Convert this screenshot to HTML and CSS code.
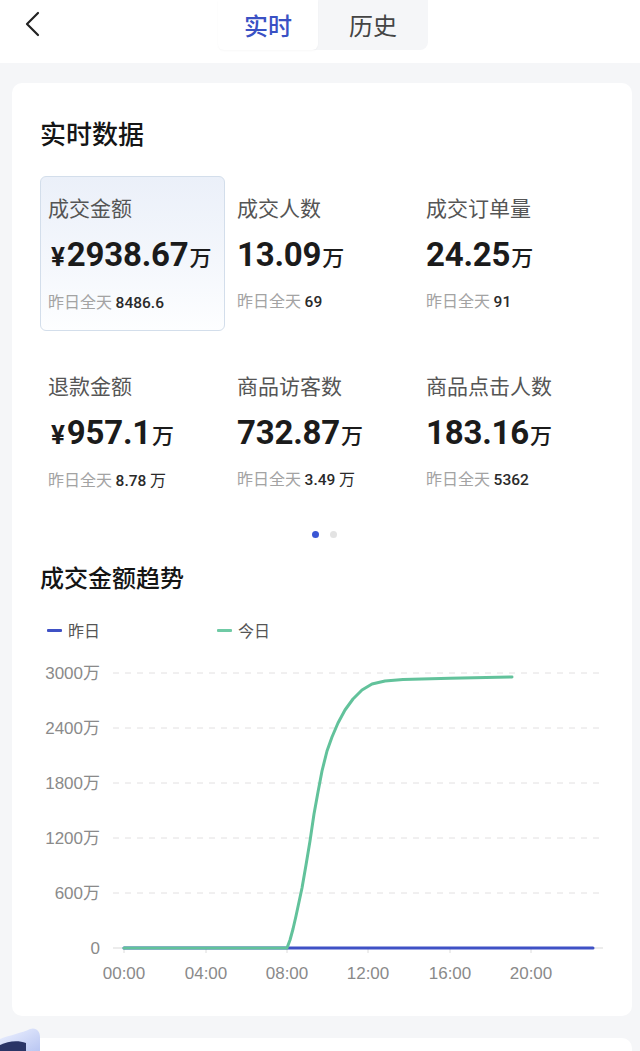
FILE: index.html
```html
<!DOCTYPE html>
<html lang="zh-CN">
<head>
<meta charset="utf-8">
<title>实时数据</title>
<link rel="stylesheet" href="styles.css">
</head>
<body>
<header class="topbar">
  <button class="back" aria-label="返回">
    <svg width="16" height="26" viewBox="0 0 16 26"><path d="M14 2 L3 13 L14 24" fill="none" stroke="#222" stroke-width="2.2" stroke-linecap="round" stroke-linejoin="round"/></svg>
  </button>
  <nav class="tabs">
    <span class="tab active">实时</span>
    <span class="tab">历史</span>
  </nav>
</header>

<main class="main">
  <section class="card">
    <h1 class="title">实时数据</h1>
    <div class="grid">
      <div class="cell selected">
        <div class="label">成交金额</div>
        <div class="value"><span class="yen">¥</span>2938.67<span class="unit">万</span></div>
        <div class="sub">昨日全天 <b>8486.6</b></div>
      </div>
      <div class="cell">
        <div class="label">成交人数</div>
        <div class="value">13.09<span class="unit">万</span></div>
        <div class="sub">昨日全天 <b>69</b></div>
      </div>
      <div class="cell">
        <div class="label">成交订单量</div>
        <div class="value">24.25<span class="unit">万</span></div>
        <div class="sub">昨日全天 <b>91</b></div>
      </div>
      <div class="cell">
        <div class="label">退款金额</div>
        <div class="value"><span class="yen">¥</span>957.1<span class="unit">万</span></div>
        <div class="sub">昨日全天 <b>8.78</b> <b class="cn">万</b></div>
      </div>
      <div class="cell">
        <div class="label">商品访客数</div>
        <div class="value">732.87<span class="unit">万</span></div>
        <div class="sub">昨日全天 <b>3.49</b> <b class="cn">万</b></div>
      </div>
      <div class="cell">
        <div class="label">商品点击人数</div>
        <div class="value">183.16<span class="unit">万</span></div>
        <div class="sub">昨日全天 <b>5362</b></div>
      </div>
    </div>
    <div class="dots"><span class="dot on"></span><span class="dot"></span></div>

    <h2 class="subtitle">成交金额趋势</h2>
    <div class="legend">
      <span class="lg"><i class="bar blue"></i>昨日</span>
      <span class="lg"><i class="bar green"></i>今日</span>
    </div>
    <svg class="chart" width="567" height="345" viewBox="0 0 567 345">
      <g class="grid-lines" stroke="#e2e0e1" stroke-width="1" stroke-dasharray="6 6">
        <line x1="73" y1="20" x2="563" y2="20"/>
        <line x1="73" y1="75" x2="563" y2="75"/>
        <line x1="73" y1="130" x2="563" y2="130"/>
        <line x1="73" y1="185" x2="563" y2="185"/>
        <line x1="73" y1="240" x2="563" y2="240"/>
      </g>
      <line x1="73" y1="295" x2="563" y2="295" stroke="#d9d9d9" stroke-width="1"/>
      <g stroke="#dcdcdc" stroke-width="1">
        <line x1="84" y1="295" x2="84" y2="300"/>
        <line x1="166" y1="295" x2="166" y2="300"/>
        <line x1="247" y1="295" x2="247" y2="300"/>
        <line x1="328" y1="295" x2="328" y2="300"/>
        <line x1="410" y1="295" x2="410" y2="300"/>
        <line x1="491" y1="295" x2="491" y2="300"/>
      </g>
      <g class="ylab" text-anchor="end">
        <text x="60" y="26">3000万</text>
        <text x="60" y="81">2400万</text>
        <text x="60" y="136">1800万</text>
        <text x="60" y="191">1200万</text>
        <text x="60" y="246">600万</text>
        <text x="60" y="301">0</text>
      </g>
      <g class="xlab" text-anchor="middle">
        <text x="84" y="326">00:00</text>
        <text x="166" y="326">04:00</text>
        <text x="247" y="326">08:00</text>
        <text x="328" y="326">12:00</text>
        <text x="410" y="326">16:00</text>
        <text x="491" y="326">20:00</text>
      </g>
      <line x1="84" y1="295" x2="553" y2="295" stroke="#3f51c5" stroke-width="3" stroke-linecap="round"/>
      <polyline fill="none" stroke="#62c29b" stroke-width="3" stroke-linecap="round" stroke-linejoin="round"
        points="84,295 247,295 250,287 253,276 256,263 259,249 262,235 266,212 270,188 274,161 278,139 282,118 287,98 292,84 298,70 305,57 313,46 322,37 332,31 345,28 363,26.5 410,25.3 472,24"/>
    </svg>
  </section>
  <section class="card next"></section>
</main>

<div class="float-badge" aria-hidden="true">
  <svg width="44" height="26" viewBox="0 0 44 26">
    <defs>
      <linearGradient id="bg1" x1="0" y1="0" x2="1" y2="1">
        <stop offset="0" stop-color="#eef2ff"/>
        <stop offset="1" stop-color="#b9c6f2"/>
      </linearGradient>
    </defs>
    <path d="M0 14 C10 10 22 8 30 4 C36 2 40 6 40 12 L40 26 L0 26 Z" fill="url(#bg1)"/>
    <path d="M0 20 C8 16 18 15 26 18 L26 26 L0 26 Z" fill="#2b3566"/>
  </svg>
</div>
</body>
</html>
```
FILE: styles.css
```css
* { box-sizing: border-box; }
html, body { margin: 0; padding: 0; }
body {
  width: 640px;
  min-height: 1051px;
  background: #f5f6f8;
  font-family: "Noto Sans CJK SC", "Noto Sans", sans-serif;
  color: #222;
  position: relative;
  overflow: hidden;
}

.topbar {
  height: 63px;
  background: #fff;
  display: flex;
  align-items: flex-start;
  padding-left: 24px;
}
.back {
  margin-top: 11px;
  width: 18px;
  height: 26px;
  padding: 0;
  border: 0;
  background: none;
  display: flex;
}
.tabs {
  margin-left: 176px;
  display: flex;
  height: 50px;
  background: #f5f6f8;
  border-radius: 0 0 8px 8px;
}
.tab {
  display: flex;
  align-items: center;
  justify-content: center;
  font-size: 24px;
  color: #444;
  width: 110px;
  height: 50px;
  padding-bottom: 2px;
}
.tab.active {
  width: 100px;
  background: #fff;
  color: #3a51c4;
  font-weight: 500;
  border-radius: 0 0 6px 6px;
  box-shadow: 0 1px 2px rgba(0,0,0,0.03);
}

.main {
  padding: 20px 8px 0 12px;
}
.card {
  background: #fff;
  border-radius: 10px;
  padding: 32px 25px 18px 28px;
}
.card.next {
  margin-top: 22px;
  height: 40px;
  padding: 0;
}
.title {
  margin: 0;
  font-size: 26px;
  line-height: 36px;
  font-weight: 500;
  color: #151515;
}

.grid {
  margin-top: 25px;
  display: grid;
  grid-template-columns: repeat(3, 189px);
  row-gap: 23px;
}
.cell {
  height: 155px;
  padding: 17px 7px 0;
  border: 1px solid transparent;
  border-radius: 6px;
}
.cell.selected {
  border-color: #d3deeb;
  background: linear-gradient(180deg, #ebf0f9 0%, #f4f7fc 55%, #fdfeff 100%);
  width: 185px;
}
.label {
  font-size: 21px;
  line-height: 26px;
  color: #555;
}
.value {
  margin-top: 16px;
  font-family: Roboto, "Noto Sans CJK SC", sans-serif;
  font-weight: 700;
  font-size: 33px;
  line-height: 38px;
  color: #1b1b1b;
  letter-spacing: -0.2px;
  white-space: nowrap;
}
.yen {
  font-size: 26px;
  margin-left: 3px;
  margin-right: 2px;
}
.unit {
  font-family: "Noto Sans CJK SC", sans-serif;
  font-weight: 500;
  font-size: 22px;
  margin-left: 1px;
}
.sub {
  margin-top: 15px;
  font-size: 16px;
  line-height: 20px;
  color: #a3a3a3;
  white-space: nowrap;
}
.sub b {
  font-family: Roboto, sans-serif;
  font-weight: 500;
  font-size: 15.5px;
  color: #2a2a2a;
}
.sub b.cn {
  font-family: "Noto Sans CJK SC", sans-serif;
  font-weight: 400;
  font-size: 16px;
}

.dots {
  margin-top: 22px;
  display: flex;
  justify-content: center;
  gap: 11px;
  height: 7px;
  padding-left: 2px;
}
.dot {
  width: 7px;
  height: 7px;
  border-radius: 50%;
  background: #e3e3e3;
}
.dot.on { background: #3a56d4; }

.subtitle {
  margin: 23px 0 0;
  font-size: 24px;
  line-height: 32px;
  font-weight: 500;
  color: #151515;
}
.legend {
  margin-top: 26px;
  display: flex;
  height: 22px;
  padding-left: 7px;
  gap: 0;
}
.lg {
  display: flex;
  align-items: center;
  font-size: 16px;
  line-height: 22px;
  color: #555;
  width: 170px;
}
.bar {
  display: inline-block;
  width: 15px;
  height: 3px;
  border-radius: 1px;
  margin-right: 6px;
}
.bar.blue { background: #3f51c5; }
.bar.green { background: #6fcaa5; }

.chart {
  display: block;
  margin-top: 12px;
}
.chart text {
  font-family: "Liberation Sans", "Noto Sans CJK SC", sans-serif;
  font-size: 17px;
  fill: #8a8a8a;
}
.chart .ylab text { font-size: 17px; }

.float-badge {
  position: absolute;
  left: 0;
  top: 1025px;
}
```
